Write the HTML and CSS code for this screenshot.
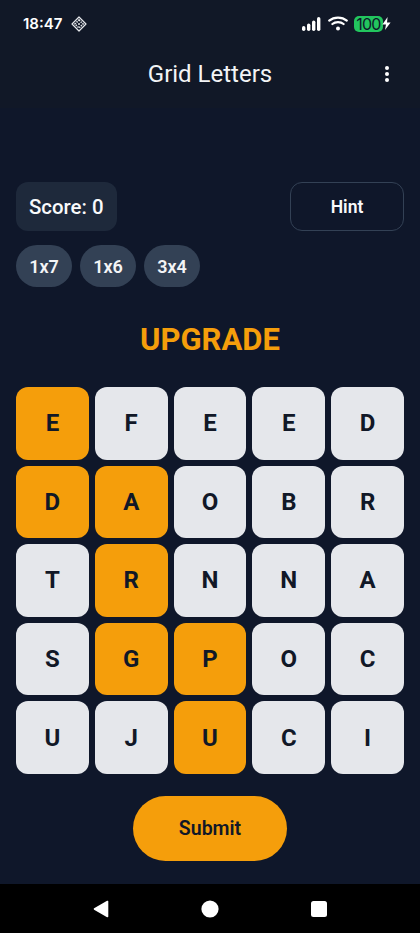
FILE: index.html
```html
<!DOCTYPE html>
<html lang="en">
<head>
<meta charset="utf-8">
<title>Grid Letters</title>
<link rel="stylesheet" href="styles.css">
</head>
<body>
<div class="app">
  <header class="top">
    <div class="status">
      <div class="status-left">
        <span class="time">18:47</span>
        <svg class="ico-diamond" width="16" height="16" viewBox="0 0 16 16"><path d="M8 1 15 8 8 15 1 8Z" fill="none" stroke="#e5e7eb" stroke-width="1.2" stroke-linejoin="round"/><path d="M8 4 12 8 8 12 4 8Z" fill="none" stroke="#e5e7eb" stroke-width="1.6" stroke-dasharray="1.4 1"/><circle cx="8" cy="8" r="1" fill="#e5e7eb"/></svg>
      </div>
      <div class="status-right">
        <svg width="21" height="14" viewBox="0 0 21 14"><rect x="1" y="9" width="3.4" height="5" rx="1.7" fill="#fff"/><rect x="6" y="6.5" width="3.4" height="7.5" rx="1.7" fill="#fff"/><rect x="11" y="3.5" width="3.4" height="10.5" rx="1.7" fill="#fff"/><rect x="16" y="0" width="3.4" height="14" rx="1.7" fill="#fff"/></svg>
        <svg width="20" height="15" viewBox="0 0 20 15"><path d="M1.2 4.6C6 .5 14 .5 18.8 4.6M4.4 8C7.4 5.4 12.6 5.4 15.6 8" fill="none" stroke="#fff" stroke-width="2.2" stroke-linecap="round"/><circle cx="10" cy="12.6" r="2" fill="#fff"/></svg>
        <span class="battery"><span class="battery-level">100</span><svg width="9" height="13" viewBox="0 0 9 13"><path d="M5.6 0 .4 7.4H4L3 13 8.6 5.4H5Z" fill="#fff"/></svg></span>
      </div>
    </div>
    <div class="appbar">
      <h1 class="title">Grid Letters</h1>
      <svg class="menu" width="4" height="16" viewBox="0 0 4 16"><circle cx="2" cy="2" r="2" fill="#fff"/><circle cx="2" cy="8" r="2" fill="#fff"/><circle cx="2" cy="14" r="2" fill="#fff"/></svg>
    </div>
  </header>

  <main class="game">
    <div class="score-row">
      <div class="score">Score: 0</div>
      <button class="hint">Hint</button>
    </div>
    <div class="chips">
      <span class="chip">1x7</span>
      <span class="chip">1x6</span>
      <span class="chip">3x4</span>
    </div>
    <div class="word">UPGRADE</div>
    <div class="grid">
      <div class="tile on">E</div><div class="tile">F</div><div class="tile">E</div><div class="tile">E</div><div class="tile">D</div>
      <div class="tile on">D</div><div class="tile on">A</div><div class="tile">O</div><div class="tile">B</div><div class="tile">R</div>
      <div class="tile">T</div><div class="tile on">R</div><div class="tile">N</div><div class="tile">N</div><div class="tile">A</div>
      <div class="tile">S</div><div class="tile on">G</div><div class="tile on">P</div><div class="tile">O</div><div class="tile">C</div>
      <div class="tile">U</div><div class="tile">J</div><div class="tile on">U</div><div class="tile">C</div><div class="tile">I</div>
    </div>
    <div class="submit-row"><button class="submit">Submit</button></div>
  </main>

  <nav class="navbar">
    <svg width="16" height="18" viewBox="0 0 16 18"><path d="M14.5 1.5V16.5L1.5 9Z" fill="#fff" stroke="#fff" stroke-width="1.6" stroke-linejoin="round"/></svg>
    <svg width="18" height="18" viewBox="0 0 18 18"><circle cx="9" cy="9" r="8.6" fill="#fff"/></svg>
    <svg width="16" height="16" viewBox="0 0 16 16"><rect x="0" y="0" width="16" height="16" rx="2.5" fill="#fff"/></svg>
  </nav>
</div>
</body>
</html>
```
FILE: styles.css
```css
* { box-sizing: border-box; }
html, body { margin: 0; padding: 0; }
body { background: #0f172a; font-family: Roboto, "Liberation Sans", sans-serif; }
.app { width: 420px; height: 933px; display: flex; flex-direction: column; overflow: hidden; background: #0f172a; }
.top { background: #111827; height: 108px; flex: none; }
.status { height: 44px; display: flex; justify-content: space-between; align-items: center; padding: 3px 29px 0 23px; }
.status-left { display: flex; align-items: center; gap: 9px; }
.time { color: #fff; font: 600 15px/20px Inter, Roboto, sans-serif; }
.status-right { display: flex; align-items: center; gap: 6px; }
.battery { display: flex; align-items: center; }
.battery-level { background: #22c55e; color: #0f172a; font: 400 16px/16px Inter, Roboto, sans-serif; border-radius: 5px; width: 29px; text-align: center; letter-spacing: -0.8px; }
.battery svg { margin-left: -1px; }
.appbar { height: 64px; position: relative; display: flex; align-items: center; justify-content: center; }
.title { margin: 0; color: #f3f4f6; font-weight: 400; font-size: 24px; line-height: 28px; position: relative; top: -2px; }
.menu { position: absolute; right: 31px; top: 22px; }
.game { flex: 1; padding: 74px 16px 0; display: flex; flex-direction: column; }
.score-row { display: flex; justify-content: space-between; align-items: stretch; height: 49px; }
.score { background: #1e293b; color: #f9fafb; border-radius: 12px; font-size: 20.4px; font-weight: 500; padding: 0 13px; display: flex; align-items: center; }
.hint { width: 114px; background: transparent; border: 1px solid #334155; border-radius: 12px; color: #f9fafb; font: 600 17.5px Roboto, sans-serif; }
.chips { display: flex; gap: 8px; margin-top: 14px; }
.chip { background: #334155; color: #f3f4f6; font-size: 18px; font-weight: 600; width: 56px; height: 42px; border-radius: 21px; display: flex; align-items: center; justify-content: center; }
.word { color: #f59e0b; font-size: 31px; font-weight: 700; line-height: 36px; text-align: center; margin-top: 35px; }
.grid { display: grid; grid-template-columns: repeat(5, 1fr); grid-auto-rows: 72.6px; gap: 6px; margin-top: 29px; }
.tile { background: #e5e7eb; color: #111827; border-radius: 12px; display: flex; align-items: center; justify-content: center; font-size: 24px; font-weight: 700; }
.tile.on { background: #f59e0b; }
.submit-row { display: flex; justify-content: center; margin-top: 22px; }
.submit { width: 154px; height: 65px; border: 0; border-radius: 33px; background: #f59e0b; color: #111827; font: 600 19.5px Roboto, sans-serif; }
.navbar { height: 49px; flex: none; background: #000; display: flex; align-items: center; justify-content: space-between; padding: 0 93px; }
```
